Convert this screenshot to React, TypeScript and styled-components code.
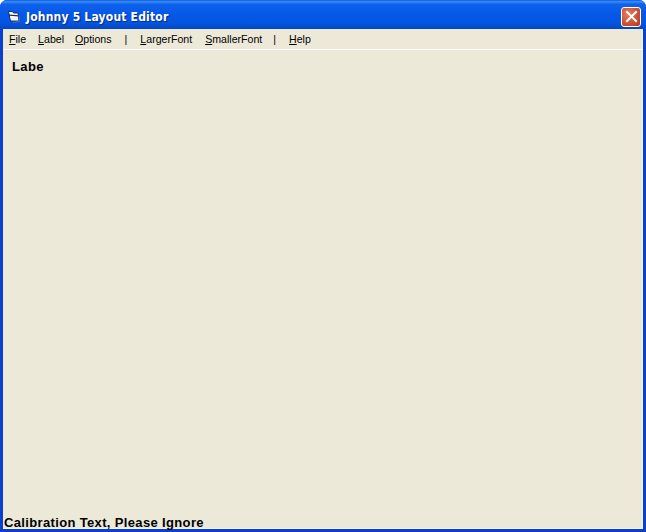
import styled, { createGlobalStyle } from "styled-components";

const GlobalStyle = createGlobalStyle`
  html, body {
    margin: 0;
    padding: 0;
    background: #fff;
  }
`;

const Window = styled.div`
  width: 646px;
  height: 532px;
  display: flex;
  flex-direction: column;
  overflow: hidden;
  box-sizing: border-box;
  border-radius: 7px 7px 0 0;
  background: #0a3fd0;
`;

const TitleBar = styled.div`
  height: 29px;
  flex: none;
  box-sizing: border-box;
  display: flex;
  align-items: center;
  padding: 4px 5px 0 7px;
  gap: 6px;
  background: linear-gradient(
    to bottom,
    #0a5be0 0%,
    #3c8df5 6%,
    #0f62ec 14%,
    #0558e6 50%,
    #0455df 80%,
    #0346c4 100%
  );
`;

const Title = styled.span`
  flex: 1;
  color: #fff;
  font-family: "DejaVu Sans Condensed", "DejaVu Sans", sans-serif;
  font-size: 12px;
  font-weight: 700;
  letter-spacing: 0.2px;
  text-shadow: 1px 1px 1px #0a2a8a;
`;

const CloseButton = styled.div`
  width: 20px;
  height: 20px;
  box-sizing: border-box;
  border: 1px solid #fff;
  border-radius: 3px;
  background: radial-gradient(circle at 35% 35%, #e07e62 0%, #d05236 55%, #b5371a 100%);
  display: flex;
  align-items: center;
  justify-content: center;
`;

const Body = styled.div`
  flex: 1;
  min-height: 0;
  display: flex;
  flex-direction: column;
  margin: 0 3px 3px;
  background: #ece9d8;
  box-shadow: inset -1px -1px 0 #f6f5ee;
`;

const MenuBar = styled.div`
  height: 20px;
  flex: none;
  display: flex;
  align-items: center;
  padding-left: 6px;
  border-bottom: 1px solid #fff;
  font-family: "Liberation Sans", sans-serif;
  font-size: 10.6px;
  line-height: 18px;
  color: #000;
`;

const MenuItem = styled.span<{ $gap: number }>`
  margin-right: ${(p) => p.$gap}px;
  u {
    text-underline-offset: 1px;
  }
`;

const Client = styled.div`
  flex: 1;
  min-height: 0;
  display: flex;
  flex-direction: column;
  justify-content: space-between;
`;

const EditorLabel = styled.div`
  margin: 9px 0 0 9px;
  font-family: "Liberation Sans", sans-serif;
  font-size: 13px;
  font-weight: 700;
  letter-spacing: 0.4px;
  line-height: 15px;
  color: #000;
`;

const Calibration = styled.div`
  margin-left: 1px;
  font-family: "Liberation Sans", sans-serif;
  font-size: 13px;
  font-weight: 700;
  letter-spacing: 0.35px;
  line-height: 13px;
  color: #000;
`;

const menus = [
  { key: "F", rest: "ile", gap: 12 },
  { key: "L", rest: "abel", gap: 11 },
  { key: "O", rest: "ptions", gap: 13 },
  { key: "", rest: "|", gap: 13 },
  { key: "L", rest: "argerFont", gap: 13 },
  { key: "S", rest: "mallerFont", gap: 11 },
  { key: "", rest: "|", gap: 13 },
  { key: "H", rest: "elp", gap: 0 },
];

function FolderIcon() {
  return (
    <svg width="13" height="13" viewBox="0 0 13 13">
      <path d="M1.5 1.5h4l1 1.5h4.5l1 8H3.5z" fill="#fff" stroke="#0d1f58" strokeWidth="0.9" />
      <path d="M2 4.6l9.5 .6v1.2L2.4 5.8z" fill="#1d2a5c" />
      <path d="M3.6 7l7.4 .4V10H4z" fill="#f2f2f2" />
      <path d="M12 5.5l.8 6-7 .8" stroke="#4a78c8" strokeWidth="0.8" fill="none" />
    </svg>
  );
}

function CloseIcon() {
  return (
    <svg width="13" height="13" viewBox="0 0 13 13">
      <path d="M2 2l9 9M11 2l-9 9" stroke="#fff" strokeWidth="2" strokeLinecap="square" fill="none" />
    </svg>
  );
}

function App() {
  return (
    <>
      <GlobalStyle />
      <Window>
        <TitleBar>
          <FolderIcon />
          <Title>Johnny 5 Layout Editor</Title>
          <CloseButton>
            <CloseIcon />
          </CloseButton>
        </TitleBar>
        <Body>
          <MenuBar>
            {menus.map((m, i) => (
              <MenuItem key={i} $gap={m.gap}>
                {m.key && <u>{m.key}</u>}
                {m.rest}
              </MenuItem>
            ))}
          </MenuBar>
          <Client>
            <EditorLabel>Labe</EditorLabel>
            <Calibration>Calibration Text, Please Ignore</Calibration>
          </Client>
        </Body>
      </Window>
    </>
  );
}

export default App;
